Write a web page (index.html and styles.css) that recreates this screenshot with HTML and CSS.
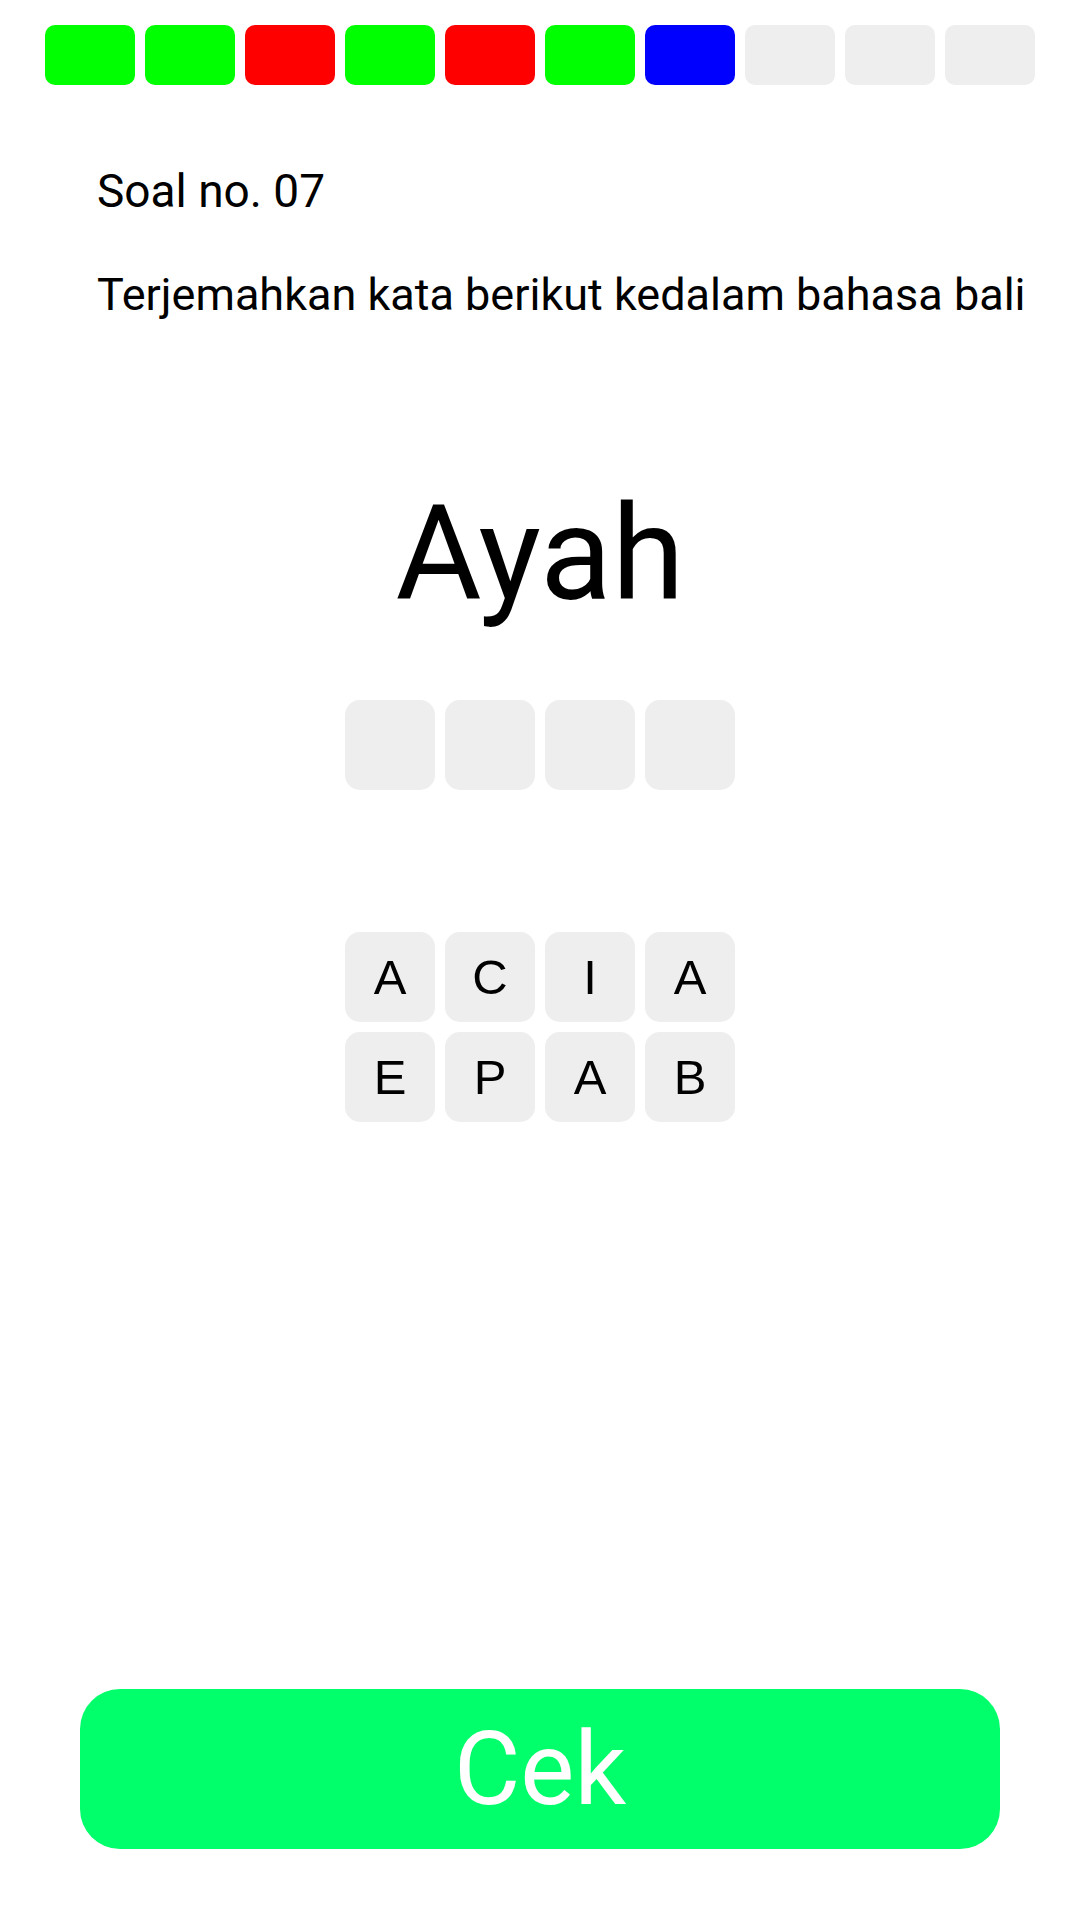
FILE: index.html
```html
<!DOCTYPE html>
<html lang="id">
<head>
<meta charset="utf-8">
<title>Soal</title>
<link rel="stylesheet" href="styles.css">
</head>
<body>
<div class="app">
  <div class="progress">
    <div class="step ok"></div>
    <div class="step ok"></div>
    <div class="step bad"></div>
    <div class="step ok"></div>
    <div class="step bad"></div>
    <div class="step ok"></div>
    <div class="step now"></div>
    <div class="step"></div>
    <div class="step"></div>
    <div class="step"></div>
  </div>
  <div class="info">
    <p class="num">Soal no. 07</p>
    <p class="task">Terjemahkan kata berikut kedalam bahasa bali</p>
  </div>
  <h1 class="word">Ayah</h1>
  <div class="slots">
    <div class="slot"></div>
    <div class="slot"></div>
    <div class="slot"></div>
    <div class="slot"></div>
  </div>
  <div class="letters">
    <div class="tile">A</div>
    <div class="tile">C</div>
    <div class="tile">I</div>
    <div class="tile">A</div>
    <div class="tile">E</div>
    <div class="tile">P</div>
    <div class="tile">A</div>
    <div class="tile">B</div>
  </div>
  <div class="spacer"></div>
  <button class="check">Cek</button>
</div>
</body>
</html>
```

FILE: styles.css
```css
html, body {
  margin: 0;
  padding: 0;
  background: #ffffff;
}
.app {
  width: 1080px;
  height: 1920px;
  display: flex;
  flex-direction: column;
  align-items: center;
  font-family: Roboto, "Liberation Sans", sans-serif;
  color: #000;
}
.progress {
  display: flex;
  gap: 10px;
  margin-top: 25px;
}
.step {
  width: 90px;
  height: 60px;
  border-radius: 10px;
  background: #eeeeee;
}
.step.ok { background: #00ff00; }
.step.bad { background: #ff0000; }
.step.now { background: #0000ff; }
.info {
  align-self: stretch;
  padding-left: 97px;
  margin-top: 76px;
}
.info p {
  margin: 0;
  font-family: Roboto, "DejaVu Sans", sans-serif;
  font-size: 45px;
  line-height: 60px;
}
.num {
  font-size: 46px !important;
}
.task {
  margin-top: 44px !important;
}
.word {
  margin: 154px 0 0;
  font-family: Roboto, sans-serif;
  font-weight: 400;
  font-size: 132px;
  line-height: 150px;
}
.slots {
  display: flex;
  gap: 10px;
  margin-top: 71px;
}
.slot {
  width: 90px;
  height: 90px;
  border-radius: 15px;
  background: #eeeeee;
}
.letters {
  display: grid;
  grid-template-columns: repeat(4, 90px);
  grid-auto-rows: 90px;
  gap: 10px;
  margin-top: 142px;
}
.tile {
  border-radius: 15px;
  background: #eeeeee;
  display: flex;
  align-items: center;
  justify-content: center;
  font-family: "Liberation Sans", Arial, sans-serif;
  font-size: 49px;
}
.spacer { flex: 1; }
.check {
  width: 920px;
  height: 160px;
  margin-bottom: 71px;
  border: none;
  border-radius: 40px;
  background: #00ff6a;
  color: #ffffff;
  font-family: Roboto, sans-serif;
  font-weight: 400;
  font-size: 102px;
  padding: 0;
}
```
